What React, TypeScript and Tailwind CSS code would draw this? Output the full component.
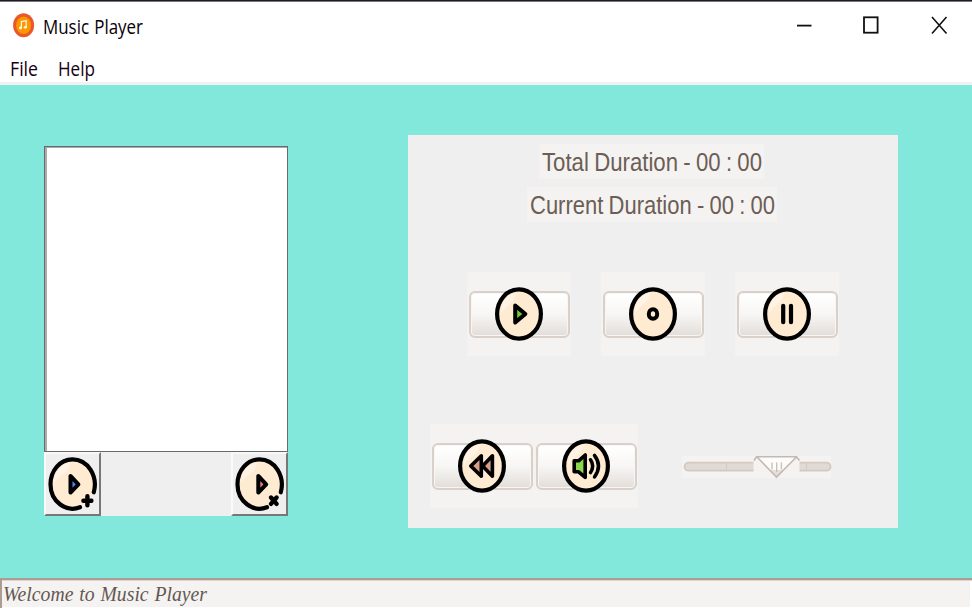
import { useLayoutEffect, useRef, type ReactNode } from 'react';

function FitText({ width, className, children }: { width: number; className: string; children: string }) {
  const ref = useRef<HTMLSpanElement>(null);
  useLayoutEffect(() => {
    const el = ref.current;
    if (!el) return;
    el.style.transform = 'none';
    el.style.transform = `scaleX(${width / el.getBoundingClientRect().width})`;
  }, [width]);
  return (
    <span className="block" style={{ width }}>
      <span ref={ref} className={`inline-block origin-left whitespace-nowrap ${className}`}>
        {children}
      </span>
    </span>
  );
}

function Disc({ children }: { children: ReactNode }) {
  return (
    <svg width="50" height="56" viewBox="0 0 50 56" fill="none" className="shrink-0">
      <ellipse cx="25" cy="28" rx="21.9" ry="24.7" fill="#ffebd2" stroke="#000" strokeWidth="4.2" />
      <path d="M7 27C7 17 12 8 23 7L19 15L11 22Z" fill="#fff3e5" />
      {children}
    </svg>
  );
}

const Play = () => (
  <Disc>
    <path d="M21.2 19.6L31.4 28L21.2 36.4Z" fill="#6fce35" stroke="#000" strokeWidth="4" strokeLinejoin="round" />
  </Disc>
);

const Stop = () => (
  <Disc>
    <ellipse cx="25" cy="28" rx="4.2" ry="4.8" fill="#ffebd2" stroke="#000" strokeWidth="4" />
  </Disc>
);

const Pause = () => (
  <Disc>
    <path d="M21.2 19.8V36.2M29 19.8V36.2" stroke="#000" strokeWidth="4.2" strokeLinecap="round" />
  </Disc>
);

const Rewind = () => (
  <Disc>
    <path d="M35.4 17.8V38.2L25.6 28Z" fill="#d89e85" stroke="#000" strokeWidth="3.6" strokeLinejoin="round" />
    <path d="M24.3 17.8V38.2L13.8 28Z" fill="#d89e85" stroke="#000" strokeWidth="3.6" strokeLinejoin="round" />
  </Disc>
);

const Volume = () => (
  <Disc>
    <path d="M13.2 22.8H17.6L24.2 17V39.4L17.6 33.8H13.2Z" fill="#8bd74b" stroke="#000" strokeWidth="3.6" strokeLinejoin="round" />
    <path d="M29.5 21.8Q33.8 28 29.5 34.6M33.5 17.4Q41.5 28 33.5 39" stroke="#000" strokeWidth="3.5" strokeLinecap="round" />
  </Disc>
);

function ListButton({ remove = false }: { remove?: boolean }) {
  return (
    <button className="flex h-full w-[57px] items-center justify-center border-2 border-b-[#777] border-l-[#fafafa] border-r-[#777] border-t-[#f8f8f8] bg-[#efefef]">
      <svg width="53" height="60" viewBox="0 -1 53 60" fill="none" className="shrink-0">
        <ellipse cx="26.3" cy="29.2" rx="21.8" ry="24.8" fill="#ffebd2" />
        <path d="M8 28C8 17 14 9 25 7L21 16L12 23Z" fill="#fff3e5" />
        <path d="M47.8 37.3C52.1 21.4 42.2 4.4 26.3 4.4C14.3 4.4 4.5 15.5 4.5 29.2C4.5 46.3 19.9 57.9 34 52.2" stroke="#000" strokeWidth="4.2" strokeLinecap="round" />
        <path d={remove ? 'M25.3 21V37.6L33.2 29.3Z' : 'M24.5 21V37.6L32.4 29.3Z'} fill={remove ? '#f4798c' : '#5388ff'} stroke="#000" strokeWidth="4" strokeLinejoin="round" />
        {remove ? (
          <path d="M38 42.5L43.6 48.9M43.6 42.5L38 48.9" stroke="#000" strokeWidth="4.4" strokeLinecap="round" />
        ) : (
          <path d="M41.4 41.3V50.3M37.4 45.8H45.4" stroke="#000" strokeWidth="4.4" strokeLinecap="round" />
        )}
      </svg>
    </button>
  );
}

function ControlButton({ children }: { children: ReactNode }) {
  return (
    <button className="flex h-[47px] w-[101px] items-center justify-center rounded-[6px] border-2 border-[#d9d0ca] bg-linear-to-b from-white from-5% via-[#f7f6f4] via-50% to-[#e4dfdb] to-95% shadow-[inset_0_0_0_1px_#f8f6f4]">
      {children}
    </button>
  );
}

function ControlCell({ children }: { children: ReactNode }) {
  return (
    <div className="flex h-[84px] w-[104px] items-center justify-center bg-[#f4f3f1]">
      <ControlButton>{children}</ControlButton>
    </div>
  );
}

export default function App() {
  return (
    <div className="flex h-[608px] w-[972px] flex-col overflow-hidden bg-white">
      <div className="h-[2px] border-b border-[#77747a] bg-[#201c26]" />
      <header className="flex h-[50px] items-start justify-between">
        <div className="flex pl-[13px] pt-[11px]">
          <svg width="22" height="25" viewBox="0 0 22 25" className="mr-[8px]">
            <ellipse cx="10.6" cy="12.2" rx="10.5" ry="12" fill="#e9572b" />
            <ellipse cx="10.6" cy="12.2" rx="7.5" ry="8.8" fill="#fc9700" />
            <path d="M8.4 15V8.5L13.2 7.7V14.3" fill="none" stroke="#fff3dc" strokeWidth="1.3" />
            <ellipse cx="7.5" cy="15" rx="1.6" ry="1.4" fill="#fff3dc" />
            <ellipse cx="12.3" cy="14.3" rx="1.6" ry="1.4" fill="#fff3dc" />
          </svg>
          <FitText width={100} className="font-['Open_Sans',sans-serif] text-[20px] leading-[28px] [word-spacing:1px] text-[#080008]">Music Player</FitText>
        </div>
        <svg width="180" height="46" viewBox="0 0 180 46" fill="none" stroke="#111" strokeWidth="1.8">
          <path d="M5 23.6H19.5" />
          <rect x="72" y="15.3" width="13.6" height="15.4" />
          <path d="M140 15L154.5 31.5M154.5 15L140 31.5" strokeWidth="1.6" />
        </svg>
      </header>
      <nav className="flex h-[30px] gap-[20px] pl-[10px] pt-[3px]">
        <FitText width={28} className="font-['Open_Sans',sans-serif] text-[20px] leading-[28px] text-[#180012]">File</FitText>
        <FitText width={37} className="font-['Open_Sans',sans-serif] text-[20px] leading-[28px] text-[#180012]">Help</FitText>
      </nav>
      <div className="h-[3px] bg-[#f2f0f0]" />
      <main className="flex h-[493px] items-start bg-[#83e8dc] pl-[44px]">
        <section className="mt-[61px] w-[244px] bg-[#efefef]">
          <div className="h-[306px] border border-[#6a6a6a] bg-white">
            <div className="h-full border-l-2 border-t border-[#aaa]" />
          </div>
          <div className="flex h-[64px] justify-between">
            <ListButton />
            <ListButton remove />
          </div>
        </section>
        <section className="ml-[120px] mt-[50px] flex h-[393px] w-[490px] flex-col bg-[#efefef]">
          <div className="ml-[131px] mt-[9px] h-[35px] w-[225px] bg-[#f4f3f1] pl-[3px]">
            <FitText width={220} className="font-['Liberation_Sans',sans-serif] text-[25px] leading-[37px] [word-spacing:-1px] text-[#6c5d55]">Total Duration - 00 : 00</FitText>
          </div>
          <div className="ml-[119px] mt-[8px] h-[35px] w-[250px] bg-[#f4f3f1] pl-[3px]">
            <FitText width={245} className="font-['Liberation_Sans',sans-serif] text-[25px] leading-[37px] [word-spacing:-1px] text-[#6c5d55]">Current Duration - 00 : 00</FitText>
          </div>
          <div className="ml-[59px] mt-[50px] flex gap-[30px]">
            <ControlCell><Play /></ControlCell>
            <ControlCell><Stop /></ControlCell>
            <ControlCell><Pause /></ControlCell>
          </div>
          <div className="ml-[22px] mt-[68px] flex items-start">
            <div className="flex h-[84px] w-[208px] items-center justify-center gap-[3px] bg-[#f4f3f1]">
              <ControlButton><Rewind /></ControlButton>
              <ControlButton><Volume /></ControlButton>
            </div>
            <svg width="150" height="24" viewBox="0 0 150 24" fill="none" className="ml-[44px] mt-[31px]">
              <rect y="1" width="149" height="22" fill="#f4f3f1" />
              <rect x="2.5" y="7.7" width="146" height="8" rx="4" fill="#e1dad4" stroke="#d3c9c1" strokeWidth="1.8" />
              <path d="M44.5 8V15M124.5 8V15" stroke="#d3c9c1" />
              <rect x="71.5" y="2" width="46" height="21" fill="#f4f3f1" />
              <path d="M75.5 2H113.5L95 22Z" fill="#fdfcfb" />
              <path d="M88 15H101L94.5 22Z" fill="#e5ded9" />
              <path d="M72 5.5L74.5 1.8H114.5L117.5 5.5M75.5 2.5L94.5 22L114 2.5" stroke="#c4b9b1" strokeWidth="1.6" />
              <path d="M90 7.5V14.5M94.7 7.5V17M99.4 7.5V14.5" stroke="#c9c0ba" strokeWidth="1.4" />
            </svg>
          </div>
        </section>
      </main>
      <footer className="flex h-[30px] border-l-2 border-t-2 border-[#ad9c94] bg-[#f4f3f1] shadow-[inset_0_1px_0_#ddd5ce,inset_-2px_-1px_0_#fff] pl-[1px]">
        <FitText width={204} className="font-['Liberation_Serif',serif] text-[21px] italic leading-[29px] [word-spacing:1px] text-[#655851]">Welcome to Music Player</FitText>
      </footer>
    </div>
  );
}
